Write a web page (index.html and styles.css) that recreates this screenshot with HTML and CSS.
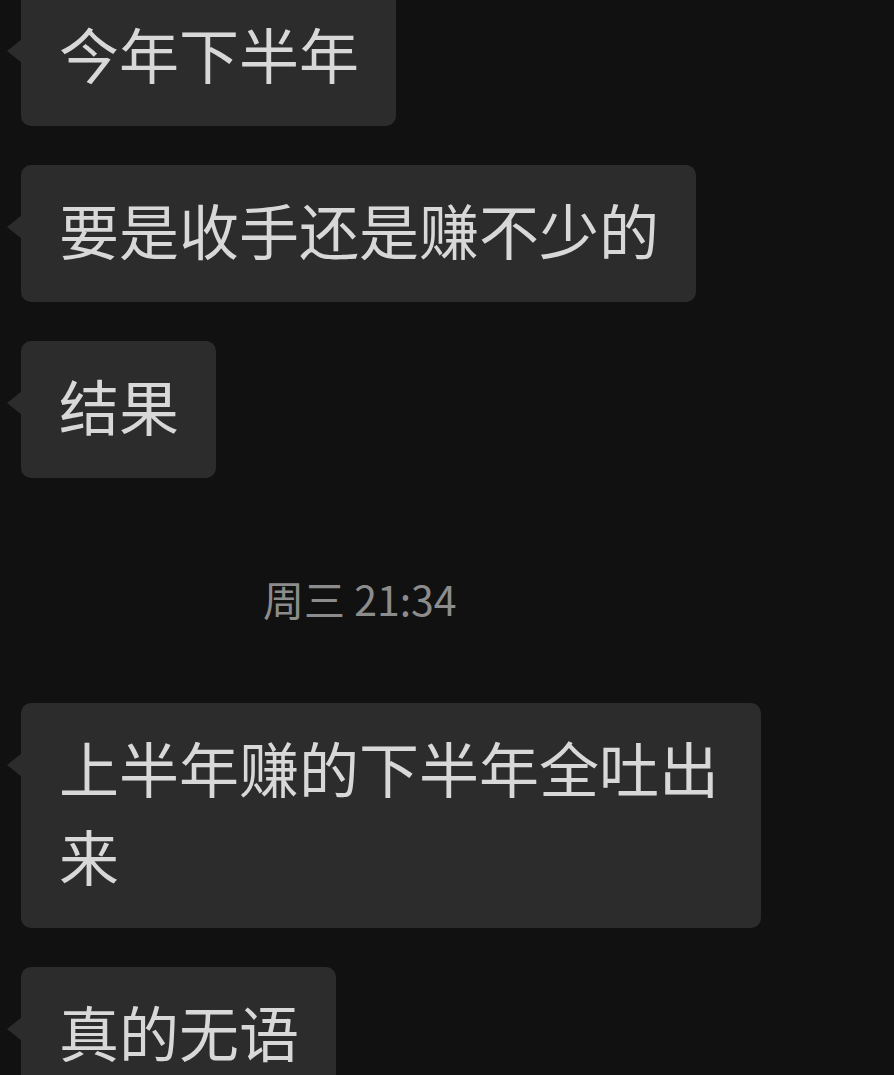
FILE: index.html
```html
<!DOCTYPE html>
<html lang="zh-CN">
<head>
    <meta charset="UTF-8">
    <meta name="viewport" content="width=device-width, initial-scale=1.0">
    <title>聊天</title>
    <link rel="stylesheet" href="styles.css">
</head>
<body>

    <div class="chat">
        <div class="msg first">
            <div class="bubble">今年下半年</div>
        </div>
        <div class="msg">
            <div class="bubble">要是收手还是赚不少的</div>
        </div>
        <div class="msg">
            <div class="bubble">结果</div>
        </div>

        <div class="time">周三 21:34</div>

        <div class="msg">
            <div class="bubble">上半年赚的下半年全吐出来</div>
        </div>
        <div class="msg">
            <div class="bubble">真的无语</div>
        </div>
    </div>

</body>
</html>
```

FILE: styles.css
```css
body {
    margin: 0;
    background-color: #111111;
    font-family: "Noto Sans CJK SC", "Noto Sans", sans-serif;
    overflow: hidden;
}
.chat {
    display: flex;
    flex-direction: column;
    gap: 39px;
    padding-left: 21px;
}
.msg {
    display: flex;
}
.msg.first {
    margin-top: -11px;
}
.bubble {
    position: relative;
    background-color: #2c2c2c;
    color: #d8d8d8;
    font-size: 60px;
    line-height: 88px;
    padding: 20px 37px 29px 38px;
    border-radius: 10px;
    max-width: 740px;
    box-sizing: border-box;
}
.bubble::before {
    content: "";
    position: absolute;
    left: -14px;
    top: 50px;
    border-style: solid;
    border-width: 12px 15px 12px 0;
    border-color: transparent #2c2c2c transparent transparent;
}
.time {
    color: #8c8c8c;
    font-size: 41px;
    line-height: 40px;
    margin: 61px 0 46px 242px;
}
```
